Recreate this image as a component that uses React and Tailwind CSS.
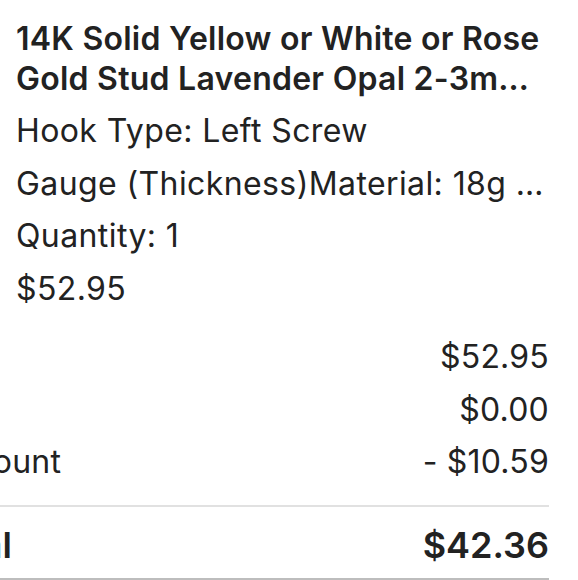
export default function App() {
    const rows = [
        { label: 'Item', value: '$52.95' },
        { label: 'Tax', value: '$0.00' },
        { label: 'Discount', value: '- $10.59' },
    ];

    return (
        <div
            className="w-[578px] h-[580px] overflow-hidden bg-white text-[#222222]"
            style={{ fontFamily: 'Inter, "Noto Sans", sans-serif' }}
        >
            {/* Item */}
            <div className="pl-4 pr-[32px] pt-[19px]">
                <h2 className="text-[32px] leading-[40px] font-semibold tracking-[0.25px] line-clamp-2">
                    14K Solid Yellow or White or Rose Gold Stud Lavender Opal 2-3mm Flat Back Labret Earring
                </h2>
                <div className="mt-[6px] text-[32px] leading-[52.5px] tracking-[0.4px]">
                    <p className="truncate">Hook Type: Left Screw</p>
                    <p className="truncate">Gauge (Thickness)Material: 18g (1mm) 6mm Post</p>
                    <p>Quantity: 1</p>
                    <p>$52.95</p>
                </div>
            </div>

            {/* Summary */}
            <div className="-ml-[74px] mr-[29px] mt-[16px]">
                {rows.map((row) => (
                    <div key={row.label} className="flex justify-between text-[32px] leading-[52.5px] tracking-[0.2px]">
                        <span>{row.label}</span>
                        <span>{row.value}</span>
                    </div>
                ))}
                <div className="mt-[16px] border-t-2 border-[#e1e1e1]" />
                <div className="mt-[12px] flex justify-between text-[36px] leading-[52px] font-semibold">
                    <span>Total</span>
                    <span>$42.36</span>
                </div>
                <div className="mt-[7px] border-t-2 border-[#bdbdbd]" />
            </div>
        </div>
    );
}
